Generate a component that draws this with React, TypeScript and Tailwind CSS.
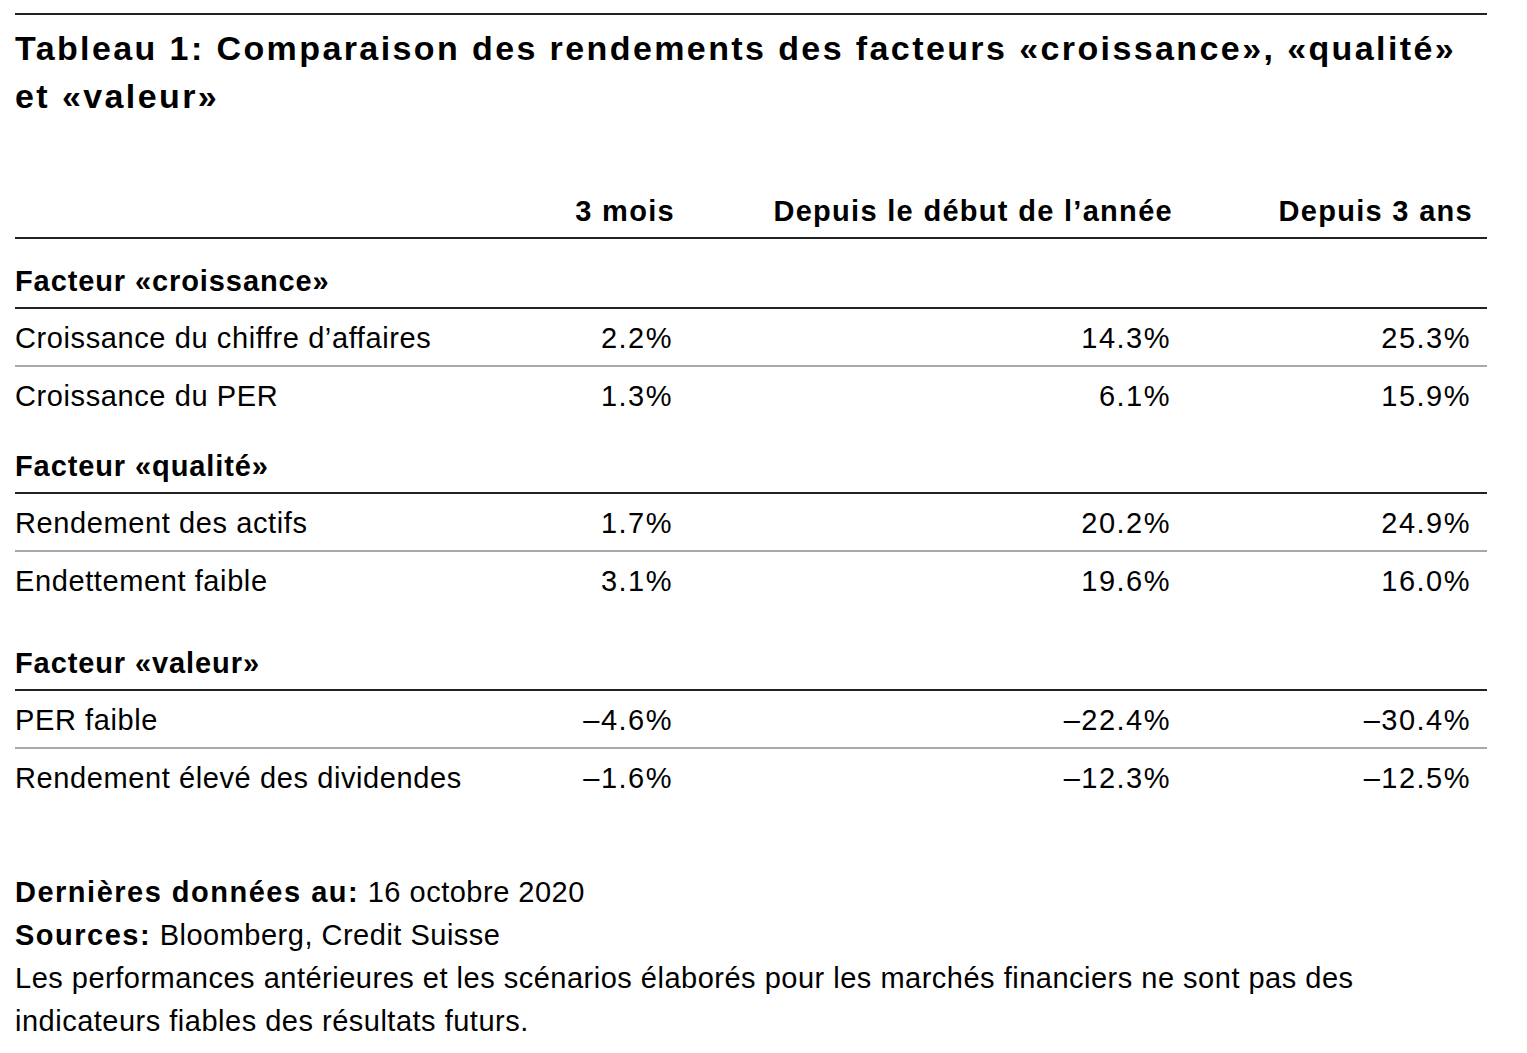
const font = { fontFamily: '"Liberation Sans", Arial, sans-serif' };

type Row = { label: string; values: [string, string, string] };
type Group = { title: string; rows: Row[]; spaced?: boolean };

const groups: Group[] = [
  {
    title: "Facteur «croissance»",
    rows: [
      { label: "Croissance du chiffre d’affaires", values: ["2.2%", "14.3%", "25.3%"] },
      { label: "Croissance du PER", values: ["1.3%", "6.1%", "15.9%"] },
    ],
  },
  {
    title: "Facteur «qualité»",
    rows: [
      { label: "Rendement des actifs", values: ["1.7%", "20.2%", "24.9%"] },
      { label: "Endettement faible", values: ["3.1%", "19.6%", "16.0%"] },
    ],
  },
  {
    title: "Facteur «valeur»",
    spaced: true,
    rows: [
      { label: "PER faible", values: ["–4.6%", "–22.4%", "–30.4%"] },
      { label: "Rendement élevé des dividendes", values: ["–1.6%", "–12.3%", "–12.5%"] },
    ],
  },
];

const cols = "grid grid-cols-[477px_180px_498px_300px_17px]";

export default function App() {
  return (
    <div className="min-h-screen bg-white text-black" style={font}>
      <div className="ml-[15px] w-[1472px] pt-[13px]">
        <div className="border-t-2 border-[#222]" />
        <h1 className="mt-[9px] whitespace-nowrap text-[34px] font-bold leading-[48px] tracking-[2.4px]">
          Tableau 1: Comparaison des rendements des facteurs «croissance», «qualité»
          <br />
          et «valeur»
        </h1>

        <div className="mt-[74px] text-[29px]">
          <div className={`${cols} border-b-2 border-[#222] pb-[9px] font-bold leading-[34px] tracking-[1.3px]`}>
            <div />
            <div className="-mr-[3px] text-right">3 mois</div>
            <div className="-mr-[3px] text-right">Depuis le début de l’année</div>
            <div className="-mr-[3px] text-right">Depuis 3 ans</div>
            <div />
          </div>

          {groups.map((g, gi) => (
            <div key={g.title}>
              <div
                className={`border-b-2 border-[#222] pb-[9px] font-bold leading-[34px] tracking-[0.9px] ${
                  g.spaced ? "pt-[38px]" : gi === 0 ? "pt-[25px]" : "pt-[26px]"
                }`}
              >
                {g.title}
              </div>
              {g.rows.map((r, ri) => (
                <div
                  key={r.label}
                  className={`${cols} pt-[12px] pb-[10px] leading-[34px] ${
                    ri < g.rows.length - 1 ? "border-b-2 border-[#a8a8a8]" : ""
                  }`}
                >
                  <div className="whitespace-nowrap tracking-[0.6px]">{r.label}</div>
                  {r.values.map((v, vi) => (
                    <div key={vi} className="-mr-[1px] text-right tracking-[1.5px]">
                      {v}
                    </div>
                  ))}
                  <div />
                </div>
              ))}
            </div>
          ))}
        </div>

        <div className="mt-[66px] whitespace-nowrap text-[29px] leading-[43px] tracking-[0.5px]">
          <p>
            <span className="font-bold tracking-[1.5px]">Dernières données au:</span> 16 octobre 2020
          </p>
          <p>
            <span className="font-bold tracking-[1.5px]">Sources:</span> Bloomberg, Credit Suisse
          </p>
          <p>
            Les performances antérieures et les scénarios élaborés pour les marchés financiers ne sont pas des
            <br />
            indicateurs fiables des résultats futurs.
          </p>
        </div>
      </div>
    </div>
  );
}
